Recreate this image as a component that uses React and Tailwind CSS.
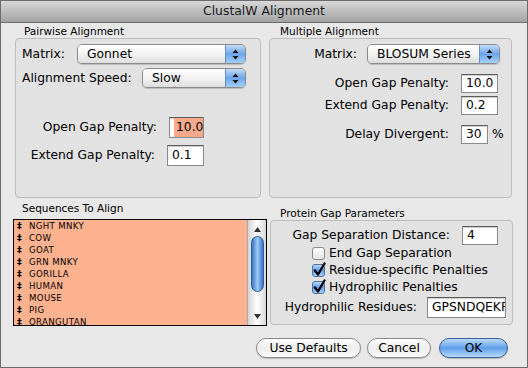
import React from "react";

function Arrows() {
  return (
    <svg width="7" height="11" viewBox="0 0 7 11">
      <path d="M3.5 0.5 L6.5 4 L0.5 4 Z" fill="#111" />
      <path d="M0.5 7 L6.5 7 L3.5 10.5 Z" fill="#111" />
    </svg>
  );
}

function Popup({ className, text }) {
  return (
    <div
      className={
        "flex h-[20px] overflow-hidden rounded-[5px] border border-[#8b8b8b] shadow-[0_1px_1px_rgba(0,0,0,0.18)] " +
        className
      }
    >
      <div className="flex flex-1 items-center bg-gradient-to-b from-white via-[#f3f3f3] to-[#dedede] pl-[9px] text-[12.3px] leading-none">
        {text}
      </div>
      <div className="flex w-[20px] items-center justify-center border-l border-[#6a8fc4] bg-gradient-to-b from-[#c2dcf7] via-[#6aa5ea] to-[#a7d0fa]">
        <Arrows />
      </div>
    </div>
  );
}

function Field({ className, children }) {
  return (
    <div
      className={
        "flex items-center overflow-hidden whitespace-nowrap border border-[#8a8a8a] border-t-[#5c5c5c] bg-white px-[4px] text-[12.3px] leading-none shadow-[inset_0_1px_1px_rgba(0,0,0,0.2)] " +
        className
      }
    >
      {children}
    </div>
  );
}

function Check({ checked, label }) {
  return (
    <div className="flex h-[17px] items-center">
      <div
        className={
          "relative h-[13px] w-[13px] rounded-[3px] border " +
          (checked
            ? "border-[#4f6f9c] bg-gradient-to-b from-[#b8d6f6] via-[#5e9de8] to-[#a9d3fb]"
            : "border-[#8a8a8a] bg-gradient-to-b from-white to-[#e4e4e4]")
        }
      >
        {checked && (
          <svg
            className="absolute -top-[3px] left-[0px]"
            width="14"
            height="15"
            viewBox="0 0 14 15"
          >
            <path
              d="M2 8.5 L5 12.5 L11.5 1.5"
              stroke="#000"
              strokeWidth="2.3"
              fill="none"
              strokeLinecap="round"
              strokeLinejoin="round"
            />
          </svg>
        )}
      </div>
      <span className="ml-[4px] text-[12.3px] leading-none">{label}</span>
    </div>
  );
}

function Btn({ className, children, primary }) {
  return (
    <div
      className={
        "flex h-[20px] items-center justify-center rounded-full border text-[12.3px] leading-none shadow-[0_1px_1px_rgba(0,0,0,0.2)] " +
        (primary
          ? "border-[#3d5f9c] bg-gradient-to-b from-[#bcdcf8] via-[#5f9ee9] to-[#b6dcfc] "
          : "border-[#8a8a8a] bg-gradient-to-b from-white via-[#eeeeee] to-[#f9f9f9] ") +
        className
      }
    >
      {children}
    </div>
  );
}

const seqs = [
  "NGHT MNKY",
  "COW",
  "GOAT",
  "GRN MNKY",
  "GORILLA",
  "HUMAN",
  "MOUSE",
  "PIG",
  "ORANGUTAN",
];

function Scrollbar() {
  return (
    <div className="flex w-[19px] flex-col items-center border-l border-[#a8a8a8] bg-gradient-to-r from-[#d4d4d4] via-white to-[#d8d8d8]">
      <div className="flex h-[12px] items-end">
        <svg width="7" height="5" viewBox="0 0 7 5">
          <path d="M3.5 0 L7 5 L0 5 Z" fill="#333" />
        </svg>
      </div>
      <div className="mt-[4px] h-[56px] w-[13px] rounded-full border border-[#2d5ea8] bg-gradient-to-r from-[#3e74c8] via-[#9ccaf7] to-[#3a6fc4]" />
      <div className="flex-1" />
      <div className="mb-[4px] flex h-[10px] items-center">
        <svg width="7" height="5" viewBox="0 0 7 5">
          <path d="M0 0 L7 0 L3.5 5 Z" fill="#333" />
        </svg>
      </div>
    </div>
  );
}

export default function App() {
  return (
    <div className="flex h-[368px] w-[528px] flex-col overflow-hidden border border-[#6b6b6b] bg-[#e8e8e8] font-['DejaVu_Sans',sans-serif] text-black">
      <div className="flex h-[22px] shrink-0 items-center justify-center border-b border-[#6d6d6d] bg-gradient-to-b from-[#d8d8d8] to-[#a3a3a3] text-[12.4px] text-[#1a1a1a]">
        ClustalW Alignment
      </div>

      {/* top section */}
      <div className="mt-[1px] flex gap-[8px] pl-[14px]">
        <div className="w-[246px]">
          <div className="h-[14px] pl-[9px] text-[10.5px] leading-[14px]">
            Pairwise Alignment
          </div>
          <div className="h-[160px] rounded-[4px] border border-[#bdbdbd] bg-[#e2e2e2] pl-[6px] pt-[5px]">
            <div className="flex items-center">
              <span className="w-[55px] text-[12.3px]">Matrix:</span>
              <Popup className="w-[169px]" text="Gonnet" />
            </div>
            <div className="mt-[4px] flex items-center">
              <span className="w-[120px] text-[12.3px]">Alignment Speed:</span>
              <Popup className="w-[104px]" text="Slow" />
            </div>
            <div className="mt-[29px] flex items-center">
              <span className="w-[135px] text-right text-[12.3px]">
                Open Gap Penalty:
              </span>
              <Field className="ml-[12px] h-[21px] w-[35px] shadow-[0_0_0_2px_#78a8e3,0_0_1px_3px_#a9c8ee] px-[1px]">
                <span className="bg-[#f6a98b] px-[2px] py-[3px]">10.0</span>
              </Field>
            </div>
            <div className="mt-[7px] flex items-center">
              <span className="w-[133px] text-right text-[12.3px]">
                Extend Gap Penalty:
              </span>
              <Field className="ml-[12px] h-[21px] w-[37px]">0.1</Field>
            </div>
          </div>
        </div>

        <div className="w-[243px]">
          <div className="h-[14px] pl-[11px] text-[10.5px] leading-[14px]">
            Multiple Alignment
          </div>
          <div className="h-[160px] rounded-[4px] border border-[#bdbdbd] bg-[#e2e2e2] pt-[5px]">
            <div className="flex items-center">
              <span className="w-[87px] text-right text-[12.3px]">Matrix:</span>
              <Popup className="ml-[10px] w-[133px]" text="BLOSUM Series" />
            </div>
            <div className="mt-[10px] flex items-center">
              <span className="w-[179px] text-right text-[12.3px]">
                Open Gap Penalty:
              </span>
              <Field className="ml-[12px] h-[19px] w-[37px]">10.0</Field>
            </div>
            <div className="mt-[3px] flex items-center">
              <span className="w-[179px] text-right text-[12.3px]">
                Extend Gap Penalty:
              </span>
              <Field className="ml-[12px] h-[19px] w-[37px]">0.2</Field>
            </div>
            <div className="mt-[10px] flex items-center">
              <span className="w-[179px] text-right text-[12.3px]">
                Delay Divergent:
              </span>
              <Field className="ml-[12px] h-[19px] w-[27px]">30</Field>
              <span className="ml-[4px] text-[12.3px]">%</span>
            </div>
          </div>
        </div>
      </div>

      {/* bottom section */}
      <div className="flex items-start gap-[3px] pl-[12px]">
        <div className="mt-[3px] w-[254px]">
          <div className="h-[14px] pl-[9px] text-[10.5px] leading-[14px]">
            Sequences To Align
          </div>
          <div className="mt-[4px] flex h-[107px] overflow-hidden border border-black bg-[#ffb28f]">
            <div className="flex-1 overflow-hidden">
              {seqs.map((s) => (
                <div
                  key={s}
                  className="flex h-[12px] items-center pl-[3px] text-[8.6px] leading-none tracking-[0.35px]"
                >
                  <span className="w-[12px] text-[9.5px] font-black">‡</span>
                  <span>{s}</span>
                </div>
              ))}
            </div>
            <Scrollbar />
          </div>
        </div>

        <div className="mt-[8px] w-[243px]">
          <div className="h-[14px] pl-[10px] text-[10.5px] leading-[14px]">
            Protein Gap Parameters
          </div>
          <div className="h-[105px] rounded-[4px] border border-[#bdbdbd] bg-[#e2e2e2] pt-[5px]">
            <div className="flex items-center">
              <span className="w-[179px] text-right text-[12.3px]">
                Gap Separation Distance:
              </span>
              <Field className="ml-[12px] h-[19px] w-[36px]">4</Field>
            </div>
            <div className="pl-[41px]">
              <Check label="End Gap Separation" />
              <Check checked label="Residue-specific Penalties" />
              <Check checked label="Hydrophilic Penalties" />
            </div>
            <div className="mt-[1px] flex items-center">
              <span className="w-[146px] text-right text-[12.3px]">
                Hydrophilic Residues:
              </span>
              <Field className="ml-[10px] h-[21px] w-[79px]">GPSNDQEKR</Field>
            </div>
          </div>
        </div>
      </div>

      {/* buttons */}
      <div className="mt-[12px] flex justify-end pr-[19px]">
        <Btn className="w-[105px]">Use Defaults</Btn>
        <Btn className="ml-[6px] w-[64px]">Cancel</Btn>
        <Btn primary className="ml-[8px] w-[69px]">
          OK
        </Btn>
      </div>
    </div>
  );
}
